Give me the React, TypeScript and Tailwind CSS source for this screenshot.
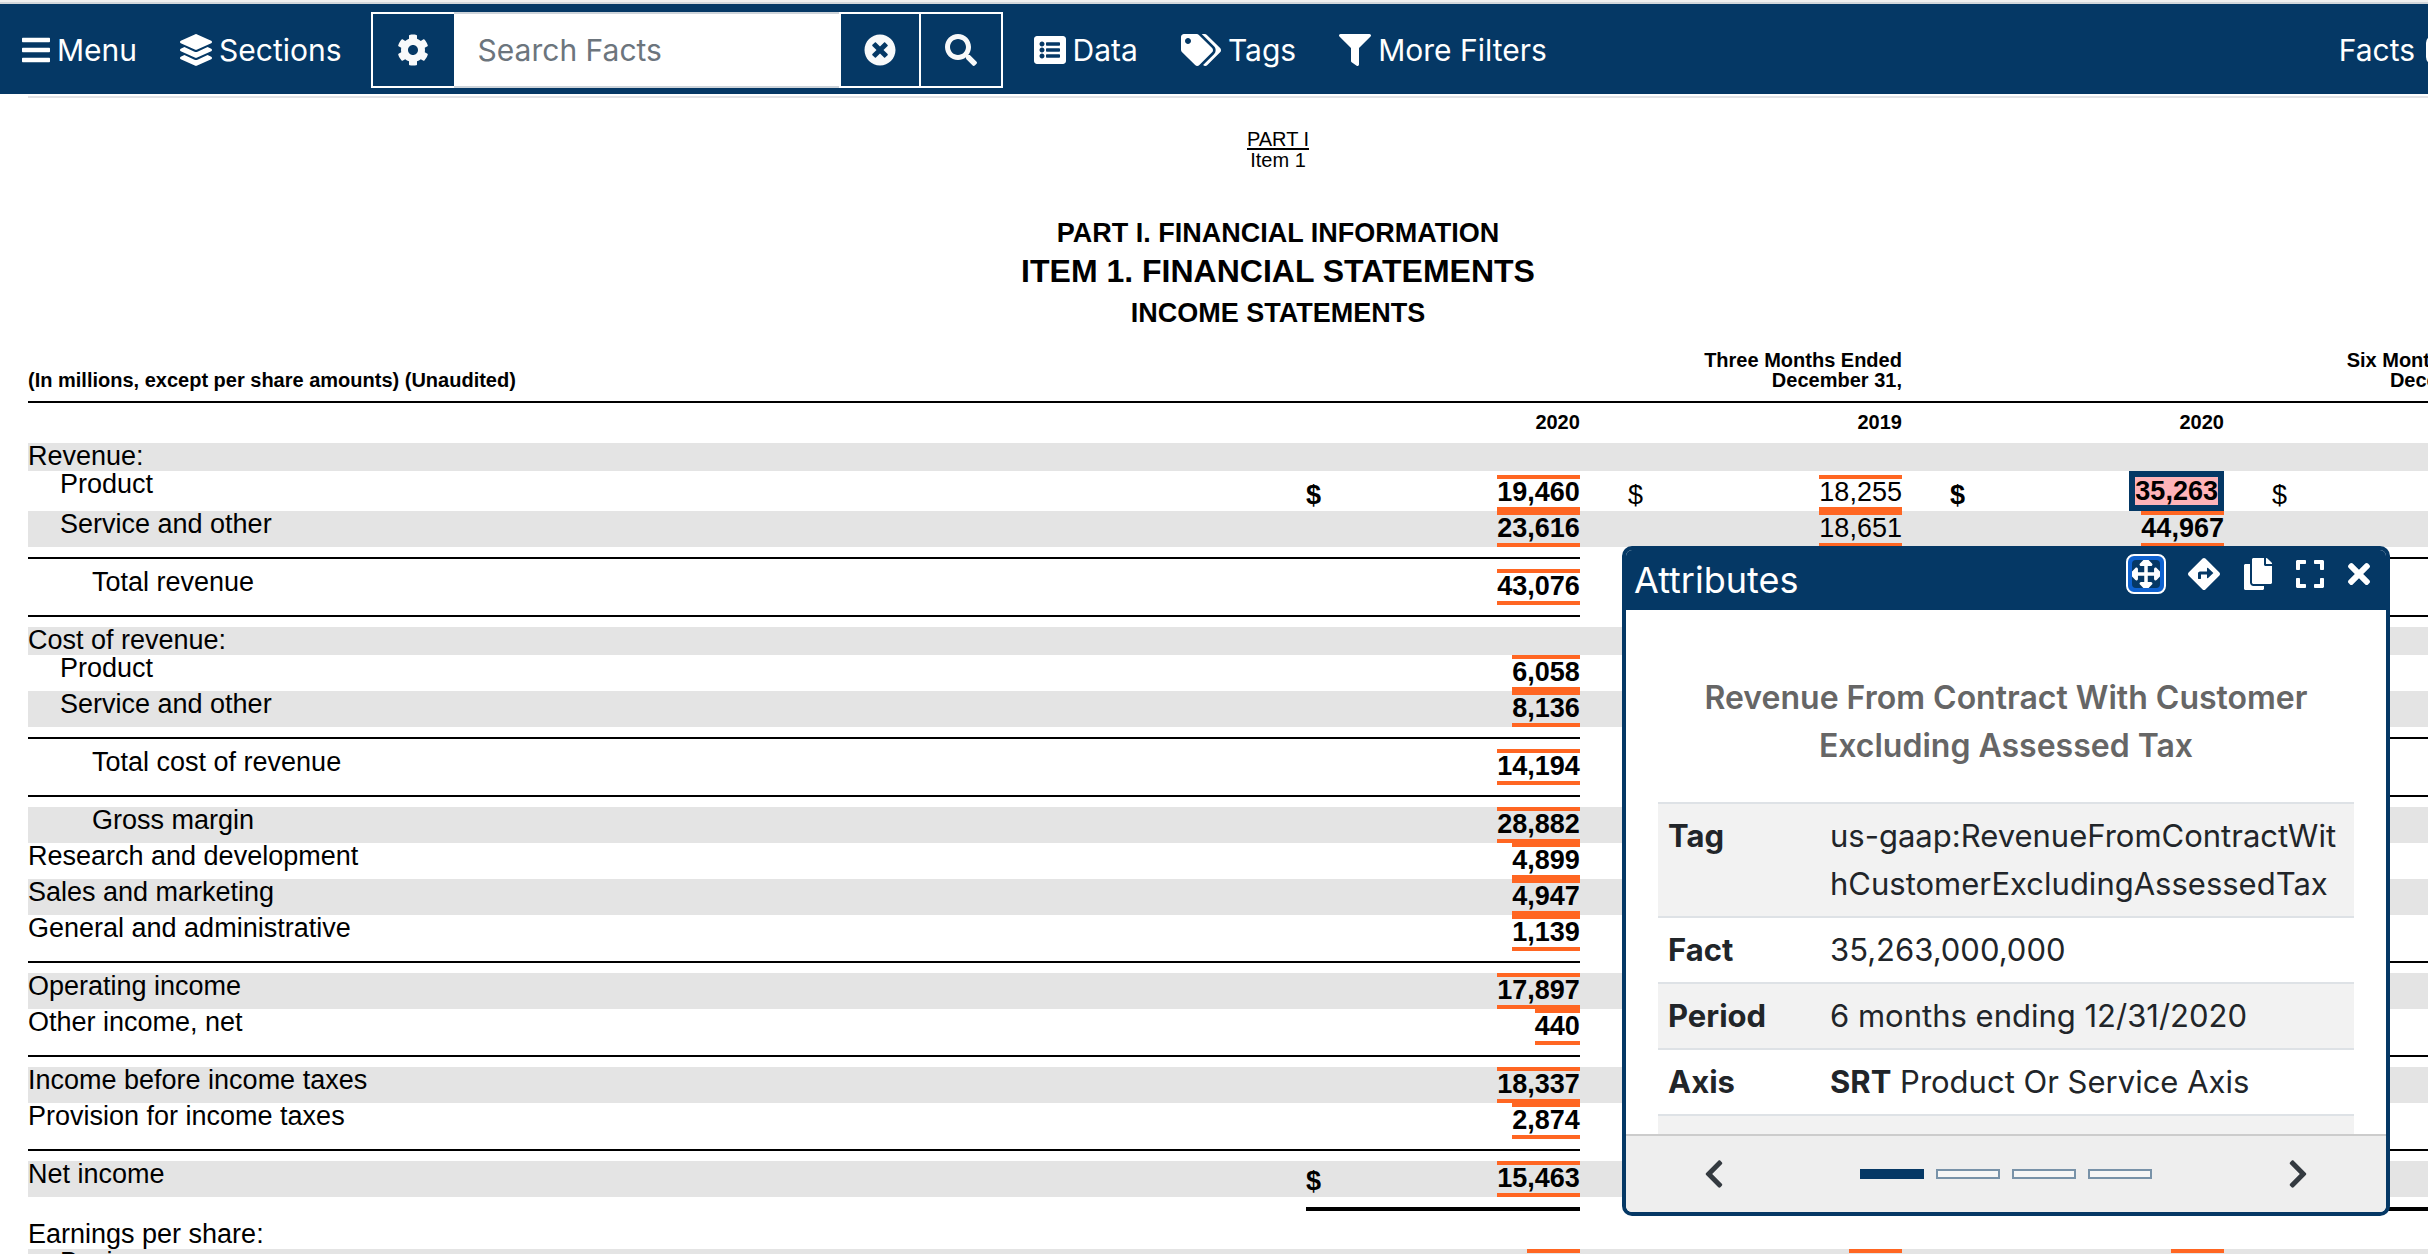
import React, { Fragment } from "react";
import {
  FaArrowsAlt,
  FaBars,
  FaChevronLeft,
  FaChevronRight,
  FaCog,
  FaCopy,
  FaDirections,
  FaExpand,
  FaFilter,
  FaLayerGroup,
  FaListAlt,
  FaSearch,
  FaTags,
  FaTimes,
  FaTimesCircle,
} from "react-icons/fa";

type Line = {
  kind: "line";
  label: string;
  indent?: 0 | 1 | 2;
  shaded?: boolean;
  short?: boolean;
  currency?: boolean;
  values?: string[];
  selected?: number;
};
type Rule = { kind: "rule"; total?: boolean };
type Row = Line | Rule;

const rule: Rule = { kind: "rule" };

const rows: Row[] = [
  { kind: "line", label: "Revenue:", shaded: true, short: true },
  { kind: "line", label: "Product", indent: 1, currency: true, values: ["19,460", "18,255", "35,263"], selected: 2 },
  { kind: "line", label: "Service and other", indent: 1, shaded: true, values: ["23,616", "18,651", "44,967"] },
  rule,
  { kind: "line", label: "Total revenue", indent: 2, values: ["43,076"] },
  rule,
  { kind: "line", label: "Cost of revenue:", shaded: true, short: true },
  { kind: "line", label: "Product", indent: 1, values: ["6,058"] },
  { kind: "line", label: "Service and other", indent: 1, shaded: true, values: ["8,136"] },
  rule,
  { kind: "line", label: "Total cost of revenue", indent: 2, values: ["14,194"] },
  rule,
  { kind: "line", label: "Gross margin", indent: 2, shaded: true, values: ["28,882"] },
  { kind: "line", label: "Research and development", values: ["4,899"] },
  { kind: "line", label: "Sales and marketing", shaded: true, values: ["4,947"] },
  { kind: "line", label: "General and administrative", values: ["1,139"] },
  rule,
  { kind: "line", label: "Operating income", shaded: true, values: ["17,897"] },
  { kind: "line", label: "Other income, net", values: ["440"] },
  rule,
  { kind: "line", label: "Income before income taxes", shaded: true, values: ["18,337"] },
  { kind: "line", label: "Provision for income taxes", values: ["2,874"] },
  rule,
  { kind: "line", label: "Net income", shaded: true, values: ["15,463"] },
  { kind: "rule", total: true },
  { kind: "line", label: "Earnings per share:", short: true },
  { kind: "line", label: "Basic", indent: 1, shaded: true, values: ["2.05", "1.53", "3.87"] },
];

const indents = ["", "pl-8", "pl-16"];
const periods = [0, 1, 2, 3];

function NavItem({ icon, children }: { icon: React.ReactNode; children: React.ReactNode }) {
  return (
    <a href="#" className="flex items-center gap-[7px] whitespace-nowrap">
      {icon}
      <span>{children}</span>
    </a>
  );
}

function Toolbar() {
  return (
    <nav className="flex h-[90px] items-center overflow-hidden bg-[#053865] pt-[2px] pl-[22px] text-[30px] leading-9 text-white">
      <div className="flex items-center gap-[43px]">
        <NavItem icon={<FaBars className="h-8 w-7" />}>Menu</NavItem>
        <NavItem icon={<FaLayerGroup className="size-8" />}>Sections</NavItem>
      </div>
      <form className="mr-[31px] ml-[29px] flex h-[76px] w-[632px] items-stretch" onSubmit={(e) => e.preventDefault()}>
        <button type="button" aria-label="Search settings" className="flex w-[83px] items-center justify-center border-2 border-r-0 border-white">
          <FaCog className="size-8 text-[#f8f9fa]" />
        </button>
        <input
          type="text"
          aria-label="Search Facts"
          placeholder="Search Facts"
          className="min-w-0 flex-1 border-y-2 border-[#ced4da] bg-white pl-6 text-[#212529] outline-none placeholder:text-[#6c757d]"
        />
        <button type="button" aria-label="Clear search" className="flex w-[82px] items-center justify-center border-2 border-white">
          <FaTimesCircle className="size-8 text-[#f8f9fa]" />
        </button>
        <button type="submit" aria-label="Search" className="flex w-[82px] items-center justify-center border-2 border-l-0 border-white">
          <FaSearch className="size-8 text-[#f8f9fa]" />
        </button>
      </form>
      <div className="flex items-center gap-[43px]">
        <NavItem icon={<FaListAlt className="size-8" />}>Data</NavItem>
        <NavItem icon={<FaTags className="h-8 w-10" />}>Tags</NavItem>
        <NavItem icon={<FaFilter className="size-8" />}>More Filters</NavItem>
      </div>
      <a href="#" className="-mr-16 ml-auto flex shrink-0 items-center gap-[11px]">
        <span>Facts</span>
        <span className="h-[30px] w-[66px] rounded-lg bg-white" />
      </a>
    </nav>
  );
}

function Fact({ value, bold, selected }: { value: string; bold: boolean; selected: boolean }) {
  const weight = bold ? "font-bold" : "font-normal";
  if (selected) {
    return (
      <button type="button" className={`ml-auto block border-6 border-[#053865] bg-[#ffb3b8] leading-[28px] ${weight}`}>
        {value}
      </button>
    );
  }
  return (
    <button type="button" className={`ml-auto block border-y-4 border-[#ff6622] pb-[2px] leading-[26px] ${weight}`}>
      {value}
    </button>
  );
}

function RuleRow({ total }: Rule) {
  const line = total ? "mb-[10px] h-[14px] border-b-4 border-black" : "mb-[10px] h-3 border-b-2 border-black";
  return (
    <tr>
      <td>{!total && <div className={line} />}</td>
      {periods.map((p) => (
        <Fragment key={p}>
          <td colSpan={2}>
            <div className={line} />
          </td>
          <td />
        </Fragment>
      ))}
    </tr>
  );
}

function LineRow({ row }: { row: Line }) {
  const height = row.short ? "h-7" : "h-9";
  const netIncome = row.label === "Net income";
  return (
    <tr className={`${height} ${row.shaded ? "bg-[#e4e4e4]" : ""}`}>
      <th scope="row" className={`text-left align-top leading-[26px] font-normal ${indents[row.indent ?? 0]}`}>
        {row.label}
      </th>
      {periods.map((p) => {
        const value = row.values?.[p];
        const bold = p % 2 === 0;
        const symbol = row.currency || (netIncome && p === 0);
        return (
          <Fragment key={p}>
            <td className={`align-bottom leading-[32px] ${bold ? "font-bold" : ""}`}>{symbol ? "$" : null}</td>
            <td className="align-bottom">
              {value && <Fact value={value} bold={bold} selected={row.selected === p} />}
            </td>
            <td />
          </Fragment>
        );
      })}
    </tr>
  );
}

function Statement() {
  return (
    <table className="mt-[17px] w-full table-fixed border-separate border-spacing-0 text-[27px]">
      <colgroup>
        <col />
        {periods.map((p) => (
          <Fragment key={p}>
            <col className="w-12" />
            <col className={p === 3 ? "w-[200px]" : "w-[226px]"} />
            <col className={p === 3 ? "w-2" : "w-12"} />
          </Fragment>
        ))}
      </colgroup>
      <thead className="text-xl leading-5">
        <tr>
          <th className="border-b-2 border-black pb-[11px] text-left align-bottom">
            (In millions, except per share amounts) (Unaudited)
          </th>
          <th colSpan={5} className="border-b-2 border-black pb-[11px] text-right align-bottom">
            Three Months Ended
            <br />
            December 31,
          </th>
          <th className="border-b-2 border-black" />
          <th colSpan={5} className="border-b-2 border-black pb-[11px] text-right align-bottom">
            Six Months Ended
            <br />
            December 31,
          </th>
          <th className="border-b-2 border-black" />
        </tr>
        <tr className="h-10">
          <td />
          {[2020, 2019, 2020, 2019].map((year, i) => (
            <Fragment key={i}>
              <th colSpan={2} className="pt-[9px] text-right align-top">
                {year}
              </th>
              <td />
            </Fragment>
          ))}
        </tr>
      </thead>
      <tbody>
        {rows.map((row, i) => (row.kind === "rule" ? <RuleRow key={i} {...row} /> : <LineRow key={i} row={row} />))}
      </tbody>
    </table>
  );
}

const attributes: [string, React.ReactNode][] = [
  ["Tag", "us-gaap:RevenueFromContractWithCustomerExcludingAssessedTax"],
  ["Fact", "35,263,000,000"],
  ["Period", "6 months ending 12/31/2020"],
  [
    "Axis",
    <>
      <strong>SRT</strong> Product Or Service Axis
    </>,
  ],
  ["", ""],
];

function AttributesDialog() {
  return (
    <section
      role="dialog"
      aria-label="Attributes"
      className="absolute top-[546px] right-[38px] flex h-[670px] w-[768px] flex-col overflow-hidden rounded-[10px] border-4 border-[#053865] bg-white text-[#212529]"
    >
      <header className="flex h-[60px] shrink-0 items-start justify-between bg-[#053865] pr-4 pl-2 text-white">
        <h2 className="text-4xl leading-[60px]">Attributes</h2>
        <div className="flex h-12 items-center gap-6">
          <button
            type="button"
            aria-label="Move"
            className="-mr-0.5 flex size-10 items-center justify-center rounded-lg border-2 border-white bg-[#0f62d0]"
          >
            <span className="flex size-7 items-center justify-center overflow-hidden rounded bg-[#053865]">
              <FaArrowsAlt className="size-8 shrink-0" />
            </span>
          </button>
          <button type="button" aria-label="Go to fact">
            <FaDirections className="size-8" />
          </button>
          <button type="button" aria-label="Copy">
            <FaCopy className="h-8 w-7" />
          </button>
          <button type="button" aria-label="Expand">
            <FaExpand className="h-8 w-7" />
          </button>
          <button type="button" aria-label="Close">
            <FaTimes className="h-8 w-[22px]" />
          </button>
        </div>
      </header>
      <div className="min-h-0 flex-1 overflow-hidden px-8 pt-16">
        <h3 className="text-center text-[32px] leading-[48px] font-semibold text-[#666666]">
          Revenue From Contract With Customer
          <br />
          Excluding Assessed Tax
        </h3>
        <table className="mt-8 w-full table-fixed border-separate border-spacing-0 text-[31px] leading-[48px]">
          <tbody>
            {attributes.map(([name, value], i) => (
              <tr key={i} className="h-[66px] odd:bg-[#f2f2f2]">
                <th scope="row" className="w-[162px] border-t-2 border-[#dee2e6] px-[10px] py-2 text-left align-top">
                  {name}
                </th>
                <td className={`border-t-2 border-[#dee2e6] px-[10px] py-2 align-top ${i === 0 ? "break-all" : ""}`}>{value}</td>
              </tr>
            ))}
          </tbody>
        </table>
      </div>
      <footer className="flex h-[78px] shrink-0 items-center justify-between border-t-2 border-[#cccccc] bg-[#eeeeee] px-[78px] text-[#343a40]">
        <button type="button" aria-label="Previous">
          <FaChevronLeft className="h-8 w-5" />
        </button>
        <div className="flex gap-3">
          {[0, 1, 2, 3].map((i) => (
            <button
              key={i}
              type="button"
              aria-label={`Page ${i + 1}`}
              className={`h-[10px] w-16 border-2 border-[#053865] ${i === 0 ? "bg-[#053865]" : "bg-white opacity-50"}`}
            />
          ))}
        </div>
        <button type="button" aria-label="Next">
          <FaChevronRight className="h-8 w-5" />
        </button>
      </footer>
    </section>
  );
}

export default function App() {
  return (
    <div className="relative h-screen overflow-hidden bg-white font-['Inter',sans-serif]">
      <div className="h-1 border-b-2 border-[#d3d7db] bg-[#f0f0f0]" />
      <Toolbar />
      <main className="mt-[2px] -mr-[100px] ml-7 border-t-2 border-[#e2e2e5] font-['Liberation_Sans',sans-serif] text-black">
        <div className="pt-[31px] text-center text-xl leading-5">
          <p>
            <a href="#" className="inline-block border-b-2 border-black leading-[18px]">
              PART I
            </a>
          </p>
          <p>Item 1</p>
        </div>
        <div className="mt-[43px] text-center font-bold">
          <p className="text-[27px] leading-10">PART I. FINANCIAL INFORMATION</p>
          <h1 className="text-[32px] leading-9">ITEM 1. FINANCIAL STATEMENTS</h1>
          <h2 className="pt-1 text-[27px] leading-10">INCOME STATEMENTS</h2>
        </div>
        <Statement />
      </main>
      <AttributesDialog />
    </div>
  );
}
